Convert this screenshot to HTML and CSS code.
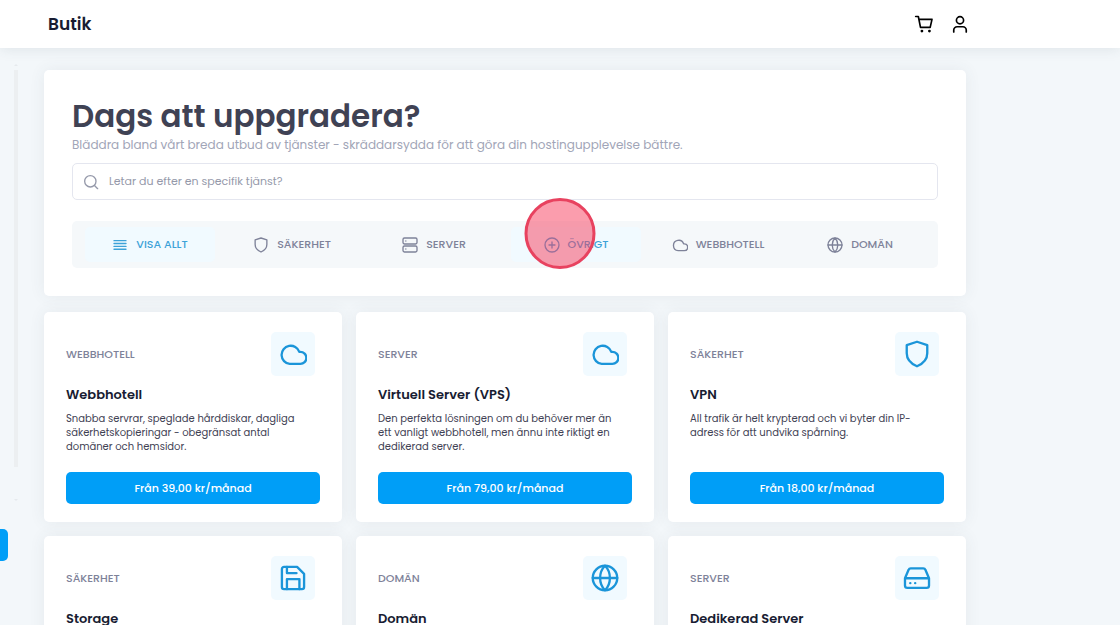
FILE: index.html
```html
<!DOCTYPE html>
<html lang="sv">
<head>
  <meta charset="UTF-8">
  <meta name="viewport" content="width=device-width, initial-scale=1.0">
  <title>Butik</title>
  <link rel="stylesheet" href="styles.css">
</head>
<body>
  <svg class="sprite" aria-hidden="true">
    <symbol id="i-cart" viewBox="0 0 24 24"><path d="M2 3h3.2l2.6 13h11.6L21.600 6.500H6"/><circle class="dot" cx="9.500" cy="20.500" r="1.700"/><circle class="dot" cx="18.500" cy="20.500" r="1.700"/></symbol>
    <symbol id="i-user" viewBox="0 0 24 24"><circle cx="12" cy="7.500" r="4.300"/><path d="M4.500 21.500v-2.200a4 4 0 0 1 4-4h7a4 4 0 0 1 4 4v2.200"/></symbol>
    <symbol id="i-search" viewBox="0 0 24 24"><circle cx="11" cy="11" r="8.500"/><path d="M17.200 17.200 22 22"/></symbol>
    <symbol id="i-list" viewBox="0 0 24 24"><path d="M3 5.500h18M3 9.800h18M3 14.100h18M3 18.400h18"/></symbol>
    <symbol id="i-shield" viewBox="0 0 24 24"><path d="M12 1.500 20.800 4.300v7c0 5.200-3.300 8.800-8.800 11.200-5.500-2.400-8.800-6-8.800-11.200v-7z"/></symbol>
    <symbol id="i-server" viewBox="0 0 24 24"><rect x="1.500" y="1.500" width="21" height="9" rx="2.200"/><rect x="1.500" y="13.500" width="21" height="9" rx="2.200"/><path d="M5.700 6h.1M5.700 18h.1"/></symbol>
    <symbol id="i-plus" viewBox="0 0 24 24"><circle cx="12" cy="12" r="10.500"/><path d="M12 7.500v9M7.500 12h9"/></symbol>
    <symbol id="i-cloud" viewBox="0 0 24 24"><path d="M18.300 10.200h-.9A7.800 7.800 0 1 0 9.200 20.500h9.100a5.100 5.100 0 0 0 0-10.300z"/></symbol>
    <symbol id="i-globe" viewBox="0 0 24 24"><circle cx="12" cy="12" r="10.500"/><path d="M1.500 12h21M12 1.500c-5.600 5.600-5.600 15.400 0 21M12 1.500c5.600 5.600 5.600 15.400 0 21"/></symbol>
    <symbol id="i-save" viewBox="0 0 24 24"><path d="M4.300 2.500h11.200l6 6v11.200a1.800 1.800 0 0 1-1.800 1.800H4.300a1.800 1.800 0 0 1-1.800-1.800V4.300a1.800 1.800 0 0 1 1.800-1.800z"/><path d="M6.800 2.500v5.300H15M6.800 21.500v-8.600h10.700v8.600"/></symbol>
    <symbol id="i-drive" viewBox="0 0 24 24"><path d="M1.700 12.200 4.800 5c.3-.8 1-1.300 1.800-1.300h10.800c.8 0 1.500.5 1.800 1.300l3.100 7.200v6.300a2 2 0 0 1-2 2H3.700a2 2 0 0 1-2-2zM1.700 12.200h20.600M6.200 16.400h.1M10.400 16.400h.1"/></symbol>
  </svg>

  <header class="topbar">
    <h2>Butik</h2>
    <div class="topbar-actions">
      <button type="button" aria-label="Kundvagn"><svg class="icon"><use href="#i-cart"/></svg></button>
      <button type="button" aria-label="Konto"><svg class="icon"><use href="#i-user"/></svg></button>
    </div>
  </header>

  <div class="layout">
    <aside class="sidebar">
      <div class="scroll-arrow up"></div>
      <div class="scroll-track"></div>
      <div class="scroll-arrow down"></div>
      <button type="button" class="side-btn" aria-label="Meny"></button>
    </aside>

    <main>
      <section class="hero">
        <h1>Dags att uppgradera?</h1>
        <p>Bläddra bland vårt breda utbud av tjänster - skräddarsydda för att göra din hostingupplevelse bättre.</p>
        <label class="search">
          <svg class="icon"><use href="#i-search"/></svg>
          <input type="text" placeholder="Letar du efter en specifik tjänst?" aria-label="Sök tjänst">
        </label>
        <nav class="tabs">
          <button type="button" class="active"><svg class="icon"><use href="#i-list"/></svg>VISA ALLT</button>
          <button type="button"><svg class="icon"><use href="#i-shield"/></svg>SÄKERHET</button>
          <button type="button"><svg class="icon"><use href="#i-server"/></svg>SERVER</button>
          <button type="button" class="active hover"><svg class="icon"><use href="#i-plus"/></svg>ÖVRIGT</button>
          <button type="button"><svg class="icon"><use href="#i-cloud"/></svg>WEBBHOTELL</button>
          <button type="button"><svg class="icon"><use href="#i-globe"/></svg>DOMÄN</button>
        </nav>
      </section>

      <section class="products">
        <article class="card">
          <div class="card-head">
            <span>WEBBHOTELL</span>
            <div class="card-icon"><svg class="icon"><use href="#i-cloud"/></svg></div>
          </div>
          <h3>Webbhotell</h3>
          <p>Snabba servrar, speglade hårddiskar, dagliga säkerhetskopieringar - obegränsat antal domäner och hemsidor.</p>
          <button type="button" class="buy-btn">Från 39,00 kr/månad</button>
        </article>
        <article class="card">
          <div class="card-head">
            <span>SERVER</span>
            <div class="card-icon"><svg class="icon"><use href="#i-cloud"/></svg></div>
          </div>
          <h3>Virtuell Server (VPS)</h3>
          <p>Den perfekta lösningen om du behöver mer än ett vanligt webbhotell, men ännu inte riktigt en dedikerad server.</p>
          <button type="button" class="buy-btn">Från 79,00 kr/månad</button>
        </article>
        <article class="card">
          <div class="card-head">
            <span>SÄKERHET</span>
            <div class="card-icon"><svg class="icon"><use href="#i-shield"/></svg></div>
          </div>
          <h3>VPN</h3>
          <p>All trafik är helt krypterad och vi byter din IP-adress för att undvika spårning.</p>
          <button type="button" class="buy-btn">Från 18,00 kr/månad</button>
        </article>
        <article class="card">
          <div class="card-head">
            <span>SÄKERHET</span>
            <div class="card-icon"><svg class="icon"><use href="#i-save"/></svg></div>
          </div>
          <h3>Storage</h3>
        </article>
        <article class="card">
          <div class="card-head">
            <span>DOMÄN</span>
            <div class="card-icon"><svg class="icon"><use href="#i-globe"/></svg></div>
          </div>
          <h3>Domän</h3>
        </article>
        <article class="card">
          <div class="card-head">
            <span>SERVER</span>
            <div class="card-icon"><svg class="icon"><use href="#i-drive"/></svg></div>
          </div>
          <h3>Dedikerad Server</h3>
        </article>
      </section>
    </main>
  </div>

  <div class="click-marker"></div>
</body>
</html>
```

FILE: styles.css
```css
* {
  box-sizing: border-box;
}

body {
  margin: 0;
  height: 100vh;
  overflow: hidden;
  position: relative;
  background: #f3f7fa;
  color: #181c32;
  font-family: Poppins, Inter, sans-serif;
  font-size: 12px;
}

h1, h2, h3, p {
  margin: 0;
}

button {
  font-family: inherit;
  border: none;
  padding: 0;
  background: none;
  cursor: pointer;
}

.sprite {
  position: absolute;
  width: 0;
  height: 0;
}

.icon {
  display: block;
  flex: none;
  width: 16px;
  height: 16px;
  fill: none;
  stroke: currentColor;
  stroke-width: 2;
  stroke-linecap: round;
  stroke-linejoin: round;
}

.dot {
  fill: currentColor;
  stroke: none;
}

/* Header */
.topbar {
  display: flex;
  align-items: center;
  justify-content: space-between;
  height: 48px;
  padding: 0 150px 0 48px;
  background: #fff;
  box-shadow: 0 2px 12px rgba(60, 75, 90, 0.1);
}

.topbar h2 {
  font-size: 17px;
  font-weight: 600;
}

.topbar-actions {
  display: flex;
  gap: 16px;
  color: #2b2d42;
}

.topbar-actions .icon {
  width: 20px;
  height: 20px;
}

/* Layout */
.layout {
  display: flex;
}

.sidebar {
  display: flex;
  flex-direction: column;
  width: 18px;
  flex: none;
  padding-top: 14px;
}

.scroll-track {
  width: 4px;
  height: 397px;
  margin: 4px 0 32px;
  align-self: flex-end;
  background: #eceff1;
}

.scroll-arrow {
  align-self: flex-end;
  border: 2px solid transparent;
}

.scroll-arrow.up {
  border-bottom-color: #e6eaed;
}

.scroll-arrow.down {
  border-top-color: #e6eaed;
}

.side-btn {
  width: 8px;
  height: 32px;
  margin-top: 26px;
  background: #009ef7;
  border-radius: 0 5px 5px 0;
}

main {
  flex: 1;
  padding: 22px 154px 0 26px;
}

/* Hero */
.hero {
  padding: 28px;
  margin-bottom: 16px;
  background: #fff;
  border-radius: 5px;
  box-shadow: 0 0 16px rgba(60, 75, 90, 0.08);
}

.hero h1 {
  font-size: 31px;
  line-height: 36px;
  font-weight: 600;
  color: #3f4254;
}

.hero p {
  font-size: 12px;
  line-height: 20px;
  margin-top: 1px;
  color: #a1a5b7;
}

.search {
  display: flex;
  align-items: center;
  gap: 10px;
  height: 37px;
  margin-top: 8px;
  padding: 0 10px;
  border: 1px solid #e4e6ef;
  border-radius: 5px;
  color: #9599aa;
}

.search input {
  flex: 1;
  min-width: 0;
  padding: 0;
  border: none;
  outline: none;
  background: none;
  font-family: inherit;
  font-size: 11px;
  color: #5e6278;
}

.search input::placeholder {
  color: #9599aa;
  opacity: 1;
}

.tabs {
  display: grid;
  grid-template-columns: repeat(6, 1fr);
  gap: 12px;
  margin-top: 21px;
  padding: 6px 13px;
  background: #f5f8fa;
  border-radius: 5px;
}

.tabs button {
  display: flex;
  align-items: center;
  justify-content: center;
  gap: 8px;
  height: 35px;
  border-radius: 5px;
  font-size: 11px;
  font-weight: 500;
  color: #7e8299;
}

.tabs button.active {
  background: #f1faff;
  color: #3da2d8;
}

/* Product cards */
.products {
  display: grid;
  grid-template-columns: repeat(3, 1fr);
  gap: 14px;
}

.card {
  display: flex;
  flex-direction: column;
  min-height: 210px;
  padding: 20px 22px 18px;
  background: #fff;
  border-radius: 5px;
  box-shadow: 0 0 16px rgba(60, 75, 90, 0.08);
}

.card-head {
  display: flex;
  align-items: center;
  justify-content: space-between;
  padding-right: 5px;
  font-size: 11px;
  font-weight: 500;
  color: #7e8299;
}

.card-icon {
  display: flex;
  align-items: center;
  justify-content: center;
  width: 44px;
  height: 44px;
  background: #f1faff;
  border-radius: 5px;
  color: #1b95d9;
}

.card-icon .icon {
  width: 28px;
  height: 28px;
}

.card h3 {
  margin-top: 9px;
  font-size: 13px;
  line-height: 20px;
  font-weight: 600;
}

.card p {
  margin: 7px 5px 0 0;
  font-size: 10px;
  line-height: 14px;
  color: #3f4254;
}

.buy-btn {
  height: 32px;
  margin-top: auto;
  background: #009ef7;
  border-radius: 5px;
  font-size: 11px;
  font-weight: 500;
  color: #fff;
}

/* Click highlight */
.click-marker {
  position: absolute;
  top: 198px;
  left: 50%;
  width: 71px;
  height: 71px;
  transform: translateX(-50%);
  border: 3px solid #e8425f;
  border-radius: 50%;
  background: rgba(247, 60, 92, 0.5);
  pointer-events: none;
}
```
